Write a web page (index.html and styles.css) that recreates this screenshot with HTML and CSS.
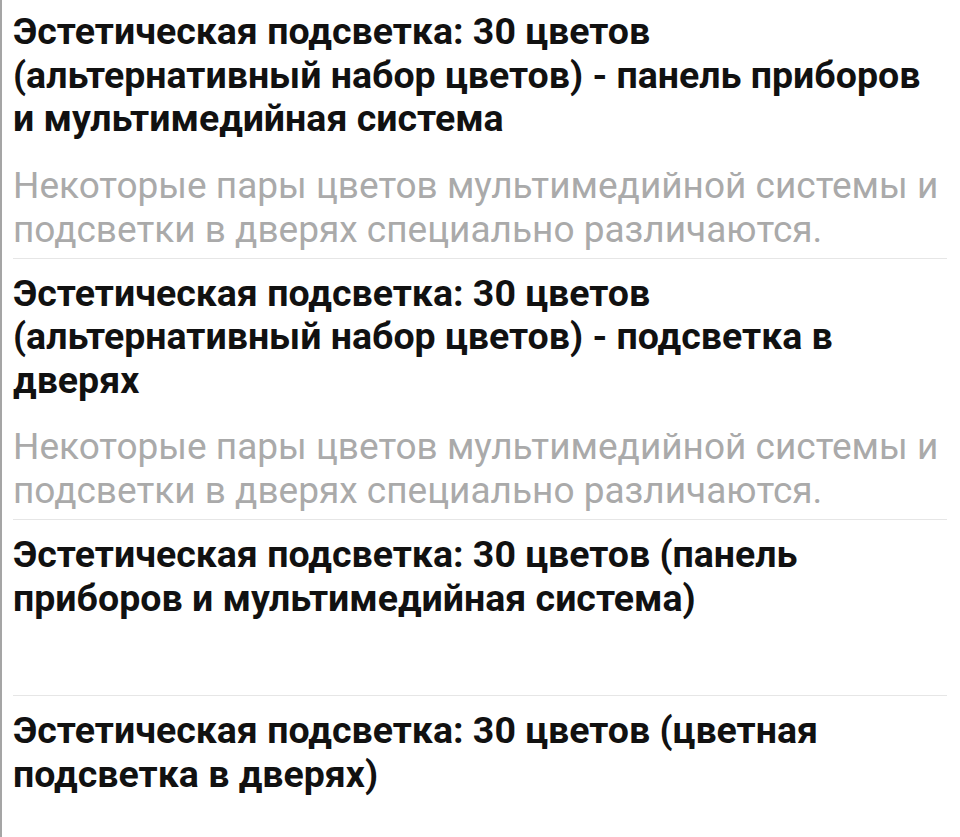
FILE: index.html
```html
<!DOCTYPE html>
<html lang="ru">
<head>
    <meta charset="UTF-8">
    <meta name="viewport" content="width=device-width, initial-scale=1.0">
    <title>Эстетическая подсветка</title>
    <link rel="stylesheet" href="styles.css">
</head>
<body>

<div class="options-list">
    <div class="option">
        <div class="option-title">Эстетическая подсветка: 30 цветов (альтернативный набор цветов) - панель приборов и мультимедийная система</div>
        <div class="option-note">Некоторые пары цветов мультимедийной системы и подсветки в дверях специально различаются.</div>
    </div>
    <div class="option">
        <div class="option-title">Эстетическая подсветка: 30 цветов (альтернативный набор цветов) - подсветка в дверях</div>
        <div class="option-note">Некоторые пары цветов мультимедийной системы и подсветки в дверях специально различаются.</div>
    </div>
    <div class="option">
        <div class="option-title">Эстетическая подсветка: 30 цветов (панель приборов и мультимедийная система)</div>
        <div class="option-note"></div>
    </div>
    <div class="option">
        <div class="option-title">Эстетическая подсветка: 30 цветов (цветная подсветка в дверях)</div>
        <div class="option-note"></div>
    </div>
</div>

</body>
</html>
```

FILE: styles.css
```css
    body {
        margin: 0;
        font-family: Roboto, "Noto Sans", sans-serif;
        background: #fff;
    }

    .options-list {
        min-height: 837px;
        box-sizing: border-box;
        border-left: 2px solid #a5a5a5;
        padding: 0 13px 0 11px;
    }

    .option {
        padding: 13px 0 6px;
        border-bottom: 1px solid #e6e6e6;
    }

    .option:first-child {
        padding-top: 10px;
    }

    .option:last-child {
        border-bottom: none;
    }

    .option-title {
        font-size: 37.5px;
        font-weight: bold;
        line-height: 43.5px;
        color: #111;
    }

    /* empty notes still keep a line of space under the title */
    .option-note {
        margin-top: 23px;
        min-height: 46px;
        font-size: 37px;
        font-weight: 400;
        line-height: 44px;
        color: #aaaaaa;
    }
```
